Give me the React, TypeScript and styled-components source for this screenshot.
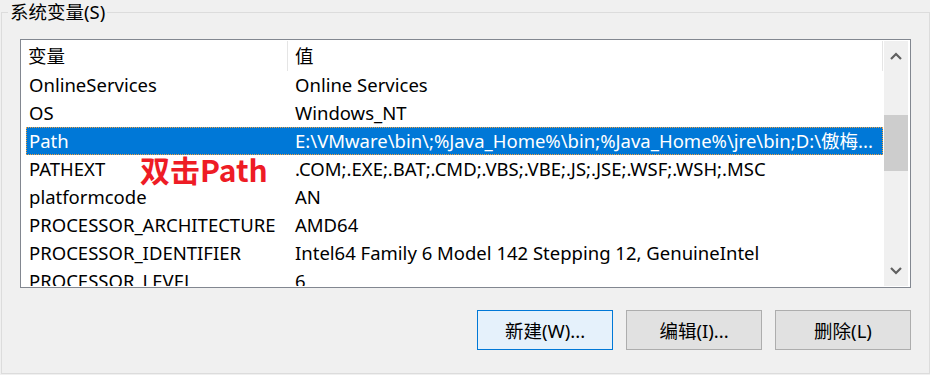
import * as React from 'react';
import styled, { createGlobalStyle } from 'styled-components';

const FONT = '"Noto Sans", "Noto Sans CJK SC", sans-serif';

const GlobalStyle = createGlobalStyle`
  html, body {
    margin: 0;
    padding: 0;
    background: #f0f0f0;
  }
  body {
    font-family: ${FONT};
    font-size: 18.5px;
    color: #000;
  }
`;

interface Variable {
  name: string;
  value: string;
}

const variables: Variable[] = [
  { name: 'OnlineServices', value: 'Online Services' },
  { name: 'OS', value: 'Windows_NT' },
  { name: 'Path', value: 'E:\\VMware\\bin\\;%Java_Home%\\bin;%Java_Home%\\jre\\bin;D:\\傲梅...' },
  { name: 'PATHEXT', value: '.COM;.EXE;.BAT;.CMD;.VBS;.VBE;.JS;.JSE;.WSF;.WSH;.MSC' },
  { name: 'platformcode', value: 'AN' },
  { name: 'PROCESSOR_ARCHITECTURE', value: 'AMD64' },
  { name: 'PROCESSOR_IDENTIFIER', value: 'Intel64 Family 6 Model 142 Stepping 12, GenuineIntel' },
  { name: 'PROCESSOR_LEVEL', value: '6' },
];

function Chevron({ up }: { up?: boolean }) {
  return (
    <svg width="12" height="8" viewBox="0 0 12 8">
      <polyline
        points={up ? '1,7 6,2 11,7' : '1,1 6,6 11,1'}
        fill="none"
        stroke="#606060"
        strokeWidth="2.2"
      />
    </svg>
  );
}

function App() {
  return (
    <Page>
      <GlobalStyle />
      <Group>
        <Legend>系统变量(S)</Legend>
        <Body>
          <ListBox>
            <ListArea>
              <Header>
                <HeaderCell>变量</HeaderCell>
                <HeaderCell divided>值</HeaderCell>
              </Header>
              {variables.map((v) => (
                <Row key={v.name} selected={v.name === 'Path'}>
                  <NameCell>{v.name}</NameCell>
                  <ValueCell>{v.value}</ValueCell>
                </Row>
              ))}
            </ListArea>
            <ScrollBar>
              <ArrowButton>
                <Chevron up />
              </ArrowButton>
              <Track>
                <Thumb />
              </Track>
              <ArrowButton>
                <Chevron />
              </ArrowButton>
            </ScrollBar>
            <Annotation>双击Path</Annotation>
          </ListBox>
          <ButtonRow>
            <Button primary>新建(W)...</Button>
            <Button>编辑(I)...</Button>
            <Button>删除(L)</Button>
          </ButtonRow>
        </Body>
      </Group>
    </Page>
  );
}

const Page = styled.div`
  width: 930px;
  height: 375px;
  overflow: hidden;
  background: #f0f0f0;
`;

const Group = styled.fieldset`
  margin: 0 0 0 1px;
  padding: 0;
  width: 929px;
  height: 374px;
  box-sizing: border-box;
  border: 1px solid #dcdcdc;
  min-width: 0;
`;

const Legend = styled.legend`
  margin-left: 6px;
  padding: 0 2px;
  font-size: 18.5px;
  line-height: 24px;
  color: #000;
`;

const Body = styled.div`
  display: flex;
  flex-direction: column;
  padding: 15px 18px 0 18px;
`;

const ListBox = styled.div`
  position: relative;
  display: flex;
  height: 249px;
  box-sizing: border-box;
  border: 1px solid #828790;
  padding: 1px 2px 1px 1px;
  background: #fff;
`;

const ListArea = styled.div`
  flex: 1;
  overflow: hidden;
`;

const Header = styled.div`
  display: grid;
  grid-template-columns: 265px 596px;
  height: 30px;
`;

const HeaderCell = styled.div<{ divided?: boolean }>`
  display: flex;
  align-items: center;
  padding-left: ${(p) => (p.divided ? '7px' : '6px')};
  border-left: ${(p) => (p.divided ? '1px solid #e5e5e5' : 'none')};
  border-right: ${(p) => (p.divided ? '1px solid #e5e5e5' : 'none')};
  box-sizing: border-box;
  line-height: 30px;
`;

const Row = styled.div<{ selected?: boolean }>`
  display: grid;
  grid-template-columns: 261px 596px;
  height: 28px;
  margin: 0 1px 0 4px;
  box-sizing: border-box;
  align-items: center;
  background: ${(p) => (p.selected ? '#0078d7' : 'transparent')};
  color: ${(p) => (p.selected ? '#fff' : '#000')};
  outline: ${(p) => (p.selected ? '1px dotted #f0a040' : 'none')};
  outline-offset: -1px;
`;

const NameCell = styled.div`
  padding-left: 3px;
  white-space: nowrap;
  overflow: hidden;
  line-height: 28px;
`;

const ValueCell = styled.div`
  padding-left: 8px;
  white-space: nowrap;
  overflow: hidden;
  line-height: 28px;
`;

const ScrollBar = styled.div`
  display: flex;
  flex-direction: column;
  width: 24px;
  background: #f0f0f0;
`;

const ArrowButton = styled.div`
  display: flex;
  align-items: center;
  justify-content: center;
  height: 30px;
`;

const Track = styled.div`
  flex: 1;
`;

const Thumb = styled.div`
  margin-top: 44px;
  height: 56px;
  background: #cdcdcd;
`;

const Annotation = styled.div`
  position: absolute;
  left: 119px;
  top: 111px;
  font-family: "Noto Sans CJK SC", sans-serif;
  font-weight: 700;
  font-size: 30px;
  line-height: 36px;
  color: #ee1c25;
  white-space: nowrap;
`;

const ButtonRow = styled.div`
  display: flex;
  justify-content: flex-end;
  gap: 13px;
  margin-top: 22px;
`;

const Button = styled.div<{ primary?: boolean }>`
  display: flex;
  align-items: center;
  justify-content: center;
  width: 136px;
  height: 40px;
  box-sizing: border-box;
  border: 1px solid ${(p) => (p.primary ? '#0078d7' : '#adadad')};
  background: ${(p) => (p.primary ? '#e5f1fb' : '#e1e1e1')};
  font-size: 18.5px;
`;

export default App;
